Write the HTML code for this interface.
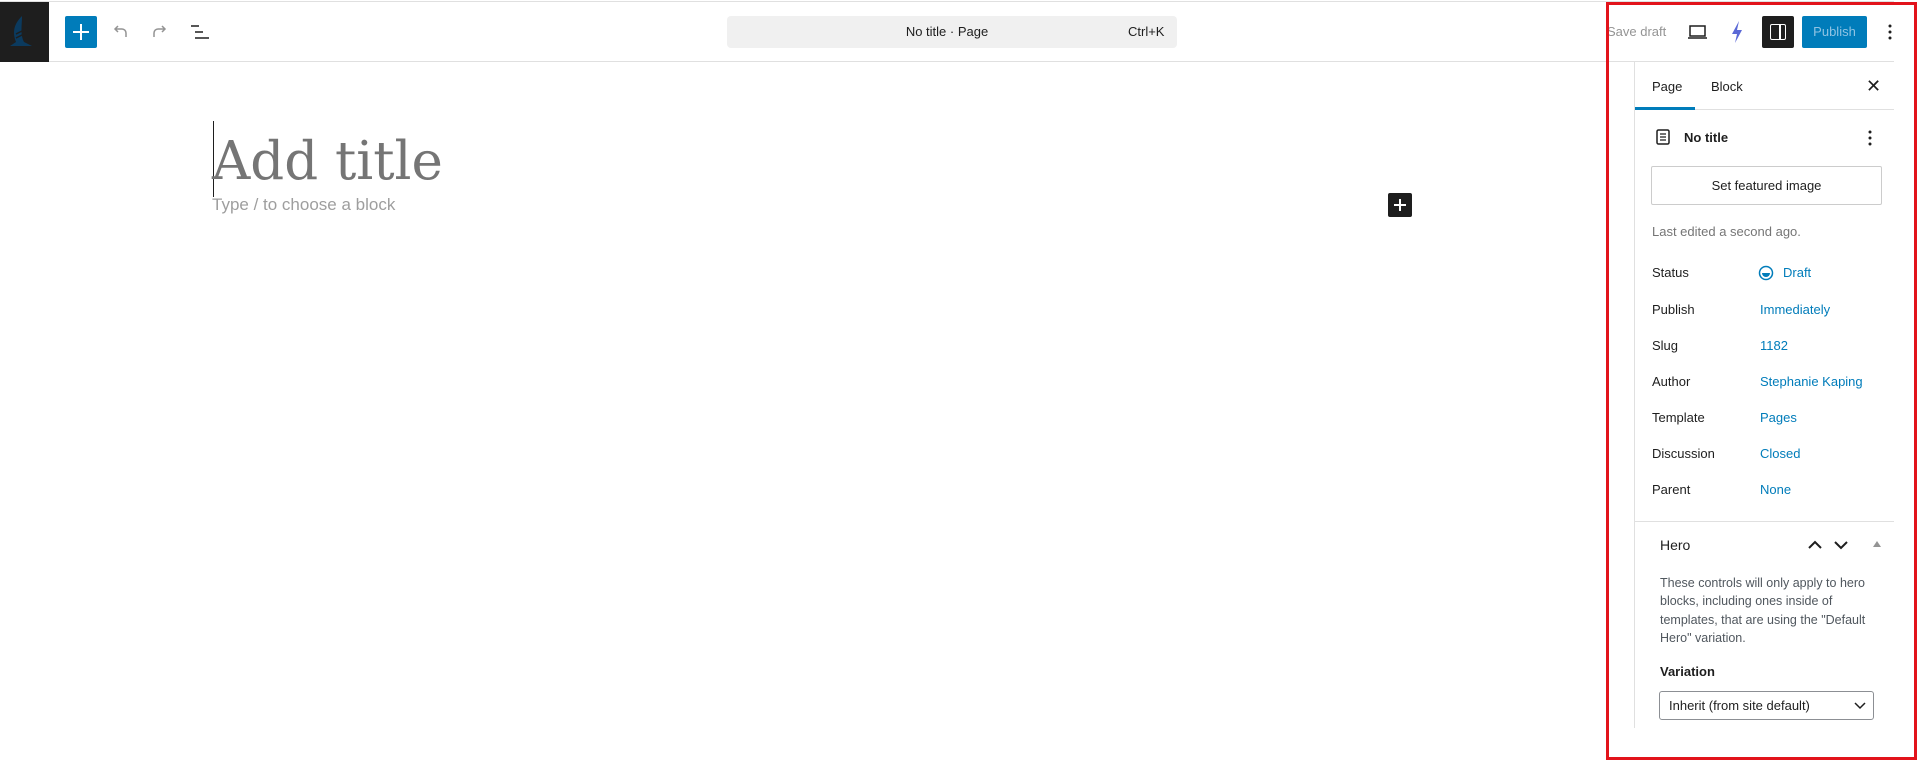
<!DOCTYPE html>
<html><head><meta charset="utf-8"><style>
*{box-sizing:border-box;margin:0;padding:0}
body{width:1918px;height:761px;position:relative;background:#fff;font-family:"Liberation Sans",sans-serif;font-size:13px;color:#1e1e1e;overflow:hidden}
.a{position:absolute}
.lbl{position:absolute;left:1652px;font-size:13px;color:#1e1e1e;line-height:16px}
.val{position:absolute;left:1760px;font-size:13px;color:#007cba;line-height:16px}
</style></head><body>
<div class="a" style="left:0;top:1px;width:1894px;height:1px;background:#e0e0e0"></div>
<div class="a" style="left:0;top:61px;width:1894px;height:1px;background:#e0e0e0"></div>
<div class="a" style="left:0;top:2px;width:49px;height:60px;background:#1e1e1e"></div>
<svg class="a" style="left:2px;top:14px" width="36" height="36" viewBox="0 0 36 36"><path d="M20 2 C12 10 10 18 14 28 L8 32 L30 32 L22 28 C18 20 20 12 20 2Z" fill="#0b3a5e"/><path d="M14 20 L26 14 M14 24 L26 18" stroke="#1e1e1e" stroke-width="1.5"/></svg>
<div class="a" style="left:65px;top:16px;width:32px;height:32px;background:#007cba;border-radius:2px"></div>
<div class="a" style="left:73px;top:31px;width:16px;height:2px;background:#fff"></div>
<div class="a" style="left:80px;top:24px;width:2px;height:16px;background:#fff"></div>
<svg class="a" style="left:110px;top:22px" width="20" height="20" viewBox="0 0 20 20"><path d="M16 15 V11 C16 8.5 14 7 12 7 H5 M8 4 L5 7 L8 10" fill="none" stroke="#949494" stroke-width="1.5"/></svg>
<svg class="a" style="left:150px;top:22px" width="20" height="20" viewBox="0 0 20 20"><path d="M4 15 V11 C4 8.5 6 7 8 7 H15 M12 4 L15 7 L12 10" fill="none" stroke="#949494" stroke-width="1.5"/></svg>
<svg class="a" style="left:190px;top:22px" width="20" height="20" viewBox="0 0 20 20"><path d="M1 4 H9 M5 10 H13 M5 16 H19" stroke="#1e1e1e" stroke-width="1.6"/></svg>
<div class="a" style="left:727px;top:16px;width:450px;height:32px;background:#f0f0f0;border-radius:4px"></div>
<div class="a" style="left:727px;top:24px;width:440px;text-align:center;font-size:13px;line-height:16px;color:#1e1e1e">No title · Page</div>
<div class="a" style="left:1128px;top:24px;font-size:13px;line-height:16px;color:#1e1e1e">Ctrl+K</div>
<div class="a" style="left:1607px;top:24px;font-size:13px;line-height:16px;color:#949494">Save draft</div>
<svg class="a" style="left:1686px;top:22px" width="24" height="20" viewBox="0 0 24 20"><rect x="4" y="4" width="15" height="10" fill="none" stroke="#1e1e1e" stroke-width="1.5"/><path d="M2 16 H21" stroke="#1e1e1e" stroke-width="1.5"/></svg>
<svg class="a" style="left:1730px;top:20px" width="14" height="24" viewBox="0 0 14 24"><path d="M9 1 L2 14 H7 L5 23 L12 10 H7Z" fill="#5b69d6"/></svg>
<div class="a" style="left:1762px;top:16px;width:32px;height:32px;background:#1e1e1e;border-radius:2px"></div>
<div class="a" style="left:1770px;top:24px;width:16px;height:16px;border:1.5px solid #fff;border-radius:2px"></div>
<div class="a" style="left:1779px;top:24px;width:1.5px;height:16px;background:#fff"></div>
<div class="a" style="left:1802px;top:16px;width:65px;height:32px;background:#007cba;border-radius:2px;color:#8fc3e3;text-align:center;line-height:32px;font-size:13px">Publish</div>
<svg class="a" style="left:1886px;top:22px" width="8" height="20" viewBox="0 0 8 20"><circle cx="4" cy="4" r="1.5" fill="#1e1e1e"/><circle cx="4" cy="10" r="1.5" fill="#1e1e1e"/><circle cx="4" cy="16" r="1.5" fill="#1e1e1e"/></svg>
<div class="a" style="left:213px;top:121px;width:1px;height:76px;background:#1e1e1e"></div>
<div class="a" style="left:212px;top:127px;font-family:'DejaVu Serif','Liberation Serif',serif;font-size:53px;line-height:70px;color:#757575">Add title</div>
<div class="a" style="left:212px;top:194px;font-size:17px;line-height:22px;color:#9e9e9e">Type / to choose a block</div>
<div class="a" style="left:1388px;top:193px;width:24px;height:24px;background:#1e1e1e;border-radius:2px"></div>
<div class="a" style="left:1394px;top:204px;width:12px;height:1.5px;background:#fff"></div>
<div class="a" style="left:1399px;top:199px;width:1.5px;height:12px;background:#fff"></div>
<div class="a" style="left:1634px;top:62px;width:1px;height:666px;background:#e0e0e0"></div>
<div class="a" style="left:1635px;top:109px;width:259px;height:1px;background:#e0e0e0"></div>
<div class="a" style="left:1635px;top:107px;width:60px;height:3px;background:#007cba"></div>
<div class="a" style="left:1652px;top:79px;font-size:13px;line-height:16px">Page</div>
<div class="a" style="left:1711px;top:79px;font-size:13px;line-height:16px">Block</div>
<div class="a" style="left:1866px;top:75px;font-size:18px;line-height:22px">✕</div>
<svg class="a" style="left:1655px;top:128px" width="16" height="18" viewBox="0 0 16 18"><rect x="2" y="2" width="12" height="14" rx="1.5" fill="none" stroke="#1e1e1e" stroke-width="1.5"/><path d="M5 6H11M5 9H11M5 12H11" stroke="#1e1e1e" stroke-width="1.3"/></svg>
<div class="a" style="left:1684px;top:130px;font-size:13px;line-height:16px;font-weight:bold">No title</div>
<svg class="a" style="left:1866px;top:128px" width="8" height="20" viewBox="0 0 8 20"><circle cx="4" cy="4" r="1.5" fill="#1e1e1e"/><circle cx="4" cy="10" r="1.5" fill="#1e1e1e"/><circle cx="4" cy="16" r="1.5" fill="#1e1e1e"/></svg>
<div class="a" style="left:1651px;top:166px;width:231px;height:39px;border:1px solid #ccc;border-radius:2px;text-align:center;line-height:37px;font-size:13px">Set featured image</div>
<div class="a" style="left:1652px;top:224px;font-size:13px;line-height:16px;color:#757575">Last edited a second ago.</div>
<div class="lbl" style="top:265px">Status</div>
<svg class="a" style="left:1758px;top:265px" width="16" height="16" viewBox="0 0 16 16"><circle cx="8" cy="8" r="6.5" fill="none" stroke="#007cba" stroke-width="1.5"/><path d="M4 8 H12 A4 4 0 0 1 4 8Z" fill="#007cba"/></svg>
<div class="val" style="top:265px;left:1783px">Draft</div>
<div class="lbl" style="top:302px">Publish</div><div class="val" style="top:302px">Immediately</div>
<div class="lbl" style="top:338px">Slug</div><div class="val" style="top:338px">1182</div>
<div class="lbl" style="top:374px">Author</div><div class="val" style="top:374px">Stephanie Kaping</div>
<div class="lbl" style="top:410px">Template</div><div class="val" style="top:410px">Pages</div>
<div class="lbl" style="top:446px">Discussion</div><div class="val" style="top:446px">Closed</div>
<div class="lbl" style="top:482px">Parent</div><div class="val" style="top:482px">None</div>
<div class="a" style="left:1635px;top:521px;width:259px;height:1px;background:#e0e0e0"></div>
<div class="a" style="left:1660px;top:536px;font-size:14px;line-height:18px;color:#1e1e1e">Hero</div>
<svg class="a" style="left:1806px;top:537px" width="44" height="16" viewBox="0 0 44 16"><path d="M3 11 L9 5 L15 11" fill="none" stroke="#1e1e1e" stroke-width="2"/><path d="M29 5 L35 11 L41 5" fill="none" stroke="#1e1e1e" stroke-width="2"/></svg>
<div class="a" style="left:1873px;top:541px;width:0;height:0;border-left:4px solid transparent;border-right:4px solid transparent;border-bottom:6px solid #949494"></div>
<div class="a" style="left:1660px;top:574px;width:225px;font-size:12.5px;line-height:18.3px;color:#50575e">These controls will only apply to hero blocks, including ones inside of templates, that are using the "Default Hero" variation.</div>
<div class="a" style="left:1660px;top:664px;font-size:13px;line-height:16px;font-weight:bold;color:#1e1e1e">Variation</div>
<div class="a" style="left:1659px;top:691px;width:215px;height:29px;border:1px solid #8c8f94;border-radius:3px;padding-left:9px;line-height:27px;font-size:13px">Inherit (from site default)</div>
<svg class="a" style="left:1853px;top:700px" width="14" height="12" viewBox="0 0 14 12"><path d="M2 3 L7 8 L12 3" fill="none" stroke="#1e1e1e" stroke-width="1.5"/></svg>
<div class="a" style="left:1606px;top:2px;width:311px;height:758px;border:3px solid #e2131b"></div>
</body></html>
